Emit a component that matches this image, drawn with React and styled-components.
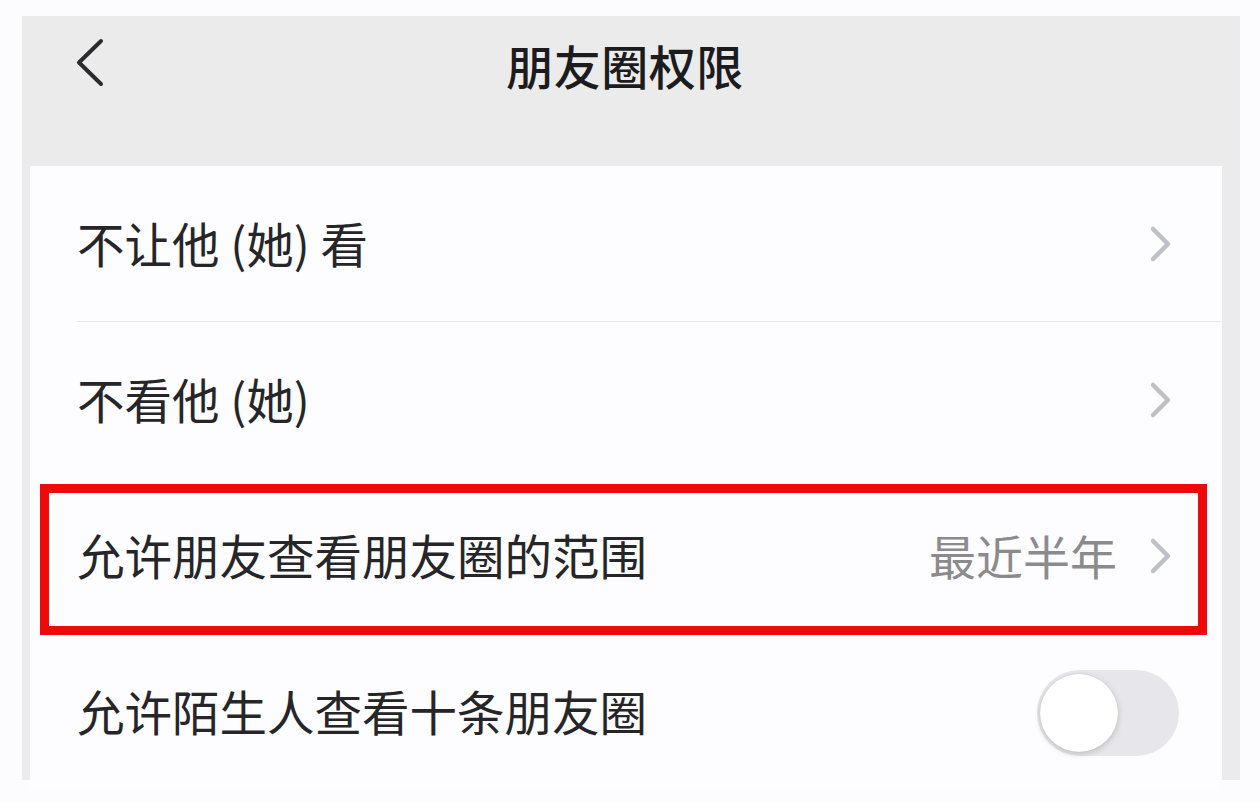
import React from "react";
import styled, { createGlobalStyle } from "styled-components";

const Global = createGlobalStyle`
  html, body { margin: 0; padding: 0; background: #fcfbfd; }
  body { font-family: "Noto Sans CJK SC", "Noto Sans", sans-serif; }
  #root { width: 1260px; height: 802px; overflow: hidden; }
`;

const Page = styled.div`
  width: 1260px;
  height: 802px;
  box-sizing: border-box;
  padding: 16px 20px 22px 22px;
  background: #fcfbfd;
`;

const Frame = styled.div`
  height: 100%;
  background: #ecebec;
  display: flex;
  flex-direction: column;
`;

const Header = styled.div`
  height: 150px;
  flex-shrink: 0;
  display: flex;
  align-items: flex-start;
  justify-content: center;
  position: relative;
`;

const BackButton = styled.div`
  position: absolute;
  left: 52px;
  top: 22px;
  width: 32px;
  height: 50px;
  display: flex;
  align-items: center;
  justify-content: center;
`;

const Title = styled.div`
  margin-top: 19px;
  margin-right: 12px;
  font-size: 47px;
  line-height: 60px;
  font-weight: 500;
  color: #1c1c1e;
  letter-spacing: 0.5px;
`;

const List = styled.div`
  flex: 1;
  margin: 0 18px 0 8px;
  background: #fdfcfe;
  display: flex;
  flex-direction: column;
`;

const Row = styled.div`
  position: relative;
  height: 156px;
  flex-shrink: 0;
  display: flex;
  align-items: center;
  padding: 0 49px 0 47px;
  box-sizing: border-box;
  ${(p) =>
    p.$divider &&
    `
    &::after {
      content: "";
      position: absolute;
      left: 47px;
      right: 0;
      bottom: 0;
      height: 1px;
      background: #ebeaec;
    }
  `}
`;

const Label = styled.div`
  flex: 1;
  font-size: 47.5px;
  line-height: 60px;
  margin-top: -2px;
  color: #262628;
  white-space: nowrap;
`;

const Value = styled.div`
  font-size: 47px;
  line-height: 60px;
  margin-top: -2px;
  color: #8b8b8e;
  margin-right: 32px;
  white-space: nowrap;
`;

const Highlight = styled.div`
  position: absolute;
  left: 10px;
  right: 15px;
  top: 6px;
  bottom: -1px;
  border: 9.5px solid #ee0a0a;
  pointer-events: none;
`;

const Toggle = styled.div`
  width: 142px;
  height: 86px;
  border-radius: 43px;
  background: #e7e6ea;
  position: relative;
  margin-right: -6px;
  margin-top: 2px;
`;

const Knob = styled.div`
  position: absolute;
  left: 3px;
  top: 4px;
  width: 78px;
  height: 78px;
  border-radius: 50%;
  background: #ffffff;
  box-shadow: 0 2px 6px rgba(0, 0, 0, 0.18), 0 0 1px rgba(0, 0, 0, 0.12);
`;

const Chevron = () => (
  <svg width="24" height="38" viewBox="0 0 24 38">
    <path
      d="M4 4 L19 19 L4 34"
      fill="none"
      stroke="#bfbfc7"
      strokeWidth="4.5"
      strokeLinecap="round"
      strokeLinejoin="round"
    />
  </svg>
);

const BackIcon = () => (
  <svg width="32" height="50" viewBox="0 0 32 50">
    <path
      d="M27 3 L5 24.5 L27 46"
      fill="none"
      stroke="#2b2b2d"
      strokeWidth="4"
      strokeLinecap="round"
      strokeLinejoin="round"
    />
  </svg>
);

export default function App() {
  return (
    <>
      <Global />
      <Page>
        <Frame>
          <Header>
            <BackButton>
              <BackIcon />
            </BackButton>
            <Title>朋友圈权限</Title>
          </Header>
          <List>
            <Row $divider>
              <Label>不让他 (她) 看</Label>
              <Chevron />
            </Row>
            <Row>
              <Label>不看他 (她)</Label>
              <Chevron />
            </Row>
            <Row>
              <Label>允许朋友查看朋友圈的范围</Label>
              <Value>最近半年</Value>
              <Chevron />
              <Highlight />
            </Row>
            <Row>
              <Label>允许陌生人查看十条朋友圈</Label>
              <Toggle>
                <Knob />
              </Toggle>
            </Row>
          </List>
        </Frame>
      </Page>
    </>
  );
}
